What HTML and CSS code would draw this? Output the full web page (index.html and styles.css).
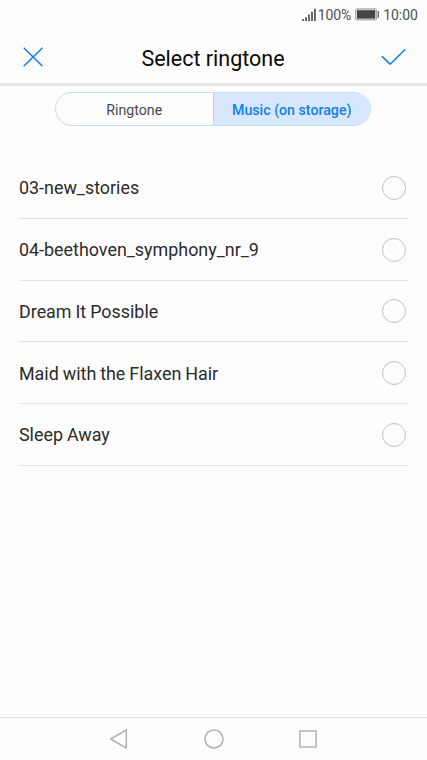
FILE: index.html
```html
<!DOCTYPE html>
<html lang="en">
<head>
<meta charset="utf-8">
<title>Select ringtone</title>
<link rel="stylesheet" href="styles.css">
</head>
<body>
<div class="status">
  <svg class="signal" width="14" height="14" viewBox="0 0 14 14" stroke="#505050" stroke-width="1.7"><path d="M1.1 13v-2M4.1 13V9.300M7 13V6.600M10 13V3.700M12.900 13V.7"/></svg>
  <span class="percent">100%</span>
  <svg class="battery" width="25" height="13" viewBox="0 0 25 13"><rect x=".7" y=".9" width="20.800" height="11" rx="1.500" fill="#e5e5e5" stroke="#aaa" stroke-width="1.200"/><rect x="2" y="2.200" width="18.200" height="8.400" fill="#454545"/><path d="M23.300 3v6.800" stroke="#777" stroke-width="1.500"/></svg>
  <span class="clock">10:00</span>
</div>
<header class="header">
  <svg width="20" height="20" viewBox="0 0 20 20" fill="none" stroke="#1682ed" stroke-width="1.600" stroke-linecap="round"><path d="M1.200 1.200l17.800 17.500M19 1.200L1.200 18.700"/></svg>
  <h1 class="title">Select ringtone</h1>
  <svg width="25" height="18" viewBox="0 0 25 18" fill="none" stroke="#1682ed" stroke-width="1.600" stroke-linecap="round"><path d="M1.300 8.700l7.900 7.500L23.800 1.800"/></svg>
</header>
<main class="content">
  <div class="tabs">
    <div class="tab">Ringtone</div>
    <div class="tab active">Music (on storage)</div>
  </div>
  <ul class="list">
    <li class="row"><span>03-new_stories</span><i class="radio"></i></li>
    <li class="row"><span>04-beethoven_symphony_nr_9</span><i class="radio"></i></li>
    <li class="row"><span>Dream It Possible</span><i class="radio"></i></li>
    <li class="row"><span>Maid with the Flaxen Hair</span><i class="radio"></i></li>
    <li class="row"><span>Sleep Away</span><i class="radio"></i></li>
  </ul>
</main>
<nav class="nav">
  <svg width="20" height="22" viewBox="0 0 20 22"><path d="M1.700 11L17.300 1.900v18.200z"/></svg>
  <svg width="20" height="22" viewBox="0 0 20 22"><circle cx="10" cy="11" r="9"/></svg>
  <svg width="20" height="22" viewBox="0 0 20 22"><rect x="1.900" y="2.900" width="16.200" height="16.200" rx=".6"/></svg>
</nav>
</body>
</html>
```

FILE: styles.css
```css
* { box-sizing: border-box; }
body {
  margin: 0;
  height: 760px;
  display: flex;
  flex-direction: column;
  background: #fdfdfd;
  color: #2b2b2b;
  font-family: Roboto, sans-serif;
  overflow: hidden;
}
.status {
  height: 29px;
  padding-right: 9px;
  display: flex;
  justify-content: flex-end;
  align-items: center;
  font-size: 14px;
  color: #505050;
}
.signal { margin-right: 2px; }
.percent { letter-spacing: -.15px; }
.battery { margin: 0 3px 0 4px; }
.header {
  height: 57px;
  padding: 2px 21px 0 23px;
  display: flex;
  align-items: center;
  justify-content: space-between;
  border-bottom: 3px solid #e5e5e5;
}
.title {
  margin: 2px 0 0 2px;
  font-size: 21.5px;
  font-weight: 400;
  color: #0a0a0a;
}
.content { flex: 1; }
.tabs {
  display: flex;
  width: 316px;
  height: 34px;
  margin: 6px 0 0 55px;
  border: 1px solid #c5ddf8;
  border-radius: 17px;
  overflow: hidden;
  font-size: 14.2px;
}
.tab {
  flex: 1;
  display: flex;
  align-items: center;
  justify-content: center;
  padding-top: 1px;
  color: #484848;
}
.active {
  border-left: 1px solid #b8d7f8;
  background: #d7e8fd;
  color: #127fee;
  font-weight: 500;
}
.list {
  list-style: none;
  margin: 31px 19px 0;
  padding: 0;
}
.row {
  height: 61.75px;
  padding: 1px 2px 0 0;
  display: flex;
  align-items: center;
  justify-content: space-between;
  border-bottom: 1px solid #e2e2e2;
  font-size: 17.9px;
  word-spacing: -.5px;
}
.radio {
  width: 24px;
  height: 24px;
  border: 1px solid #c2c2c2;
  border-radius: 50%;
}
.nav {
  height: 43px;
  padding: 0 109px;
  display: flex;
  align-items: center;
  justify-content: space-between;
  border-top: 1px solid #e3e3e3;
}
.nav svg {
  fill: none;
  stroke: #b0b0b0;
  stroke-width: 1.500;
  stroke-linejoin: round;
}
```
